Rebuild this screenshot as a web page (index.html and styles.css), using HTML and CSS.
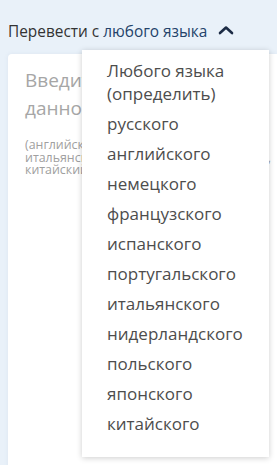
FILE: index.html
```html
<!DOCTYPE html>
<html lang="ru">
<head>
    <meta charset="UTF-8">
    <meta name="viewport" content="width=device-width, initial-scale=1.0">
    <title>Переводчик</title>
    <link rel="stylesheet" href="styles.css">
</head>
<body>
    <div class="page">
        <div class="lang-bar">
            <span class="lang-label">Перевести с</span>
            <span class="lang-value">любого языка</span>
            <svg class="chevron" width="16" height="10" viewBox="0 0 16 10">
                <path d="M2 8 L8 2.5 L14 8" fill="none" stroke="#1c2b45" stroke-width="2.6" stroke-linecap="round" stroke-linejoin="round"/>
            </svg>
        </div>
        <div class="source-card">
            <div class="placeholder">Введите текст<br>данного документа</div>
            <div class="hint">(английский, немецкий, французский, и<br>итальянский, нидерландский, польский,<br>китайский и др.)</div>
        </div>

        <ul class="lang-menu">
            <li>Любого языка (определить)</li>
            <li>русского</li>
            <li>английского</li>
            <li>немецкого</li>
            <li>французского</li>
            <li>испанского</li>
            <li>португальского</li>
            <li>итальянского</li>
            <li>нидерландского</li>
            <li>польского</li>
            <li>японского</li>
            <li>китайского</li>
        </ul>
    </div>
</body>
</html>
```

FILE: styles.css
```css
html, body {
    margin: 0;
    height: 100%;
    overflow: hidden;
}
body {
    font-family: "Open Sans", "Noto Sans", sans-serif;
    background-color: #e9f1f9;
    color: #333;
}
.page {
    position: relative;
    padding: 20px 0 0 8px;
}
.lang-bar {
    display: flex;
    align-items: center;
    height: 22px;
    font-size: 15.4px;
    color: #333;
}
.lang-value {
    margin-left: 4px;
    color: #24436a;
}
.chevron {
    margin-left: 11px;
    margin-top: -2px;
}
.source-card {
    margin-top: 12px;
    background-color: #fff;
    border-radius: 4px 0 0 0;
    height: 420px;
    padding: 12px 0 0 17px;
    white-space: nowrap;
    overflow: hidden;
    box-shadow: 0 0 4px rgba(120, 140, 170, 0.12);
}
.placeholder {
    font-size: 19px;
    line-height: 28px;
    color: #a6a6a6;
}
.hint {
    margin-top: 17px;
    font-size: 12.4px;
    line-height: 12.5px;
    color: #a0a0a0;
}
.lang-menu {
    position: absolute;
    left: 82px;
    top: 50px;
    width: 187px;
    box-sizing: border-box;
    margin: 0;
    padding: 5px 10px 19px 25px;
    list-style: none;
    background-color: #fff;
    box-shadow: 0 1px 6px rgba(0, 0, 0, 0.2);
}
.lang-menu li {
    font-size: 17px;
    line-height: 23px;
    padding: 3.5px 0;
    color: #4d4d4d;
}
```
